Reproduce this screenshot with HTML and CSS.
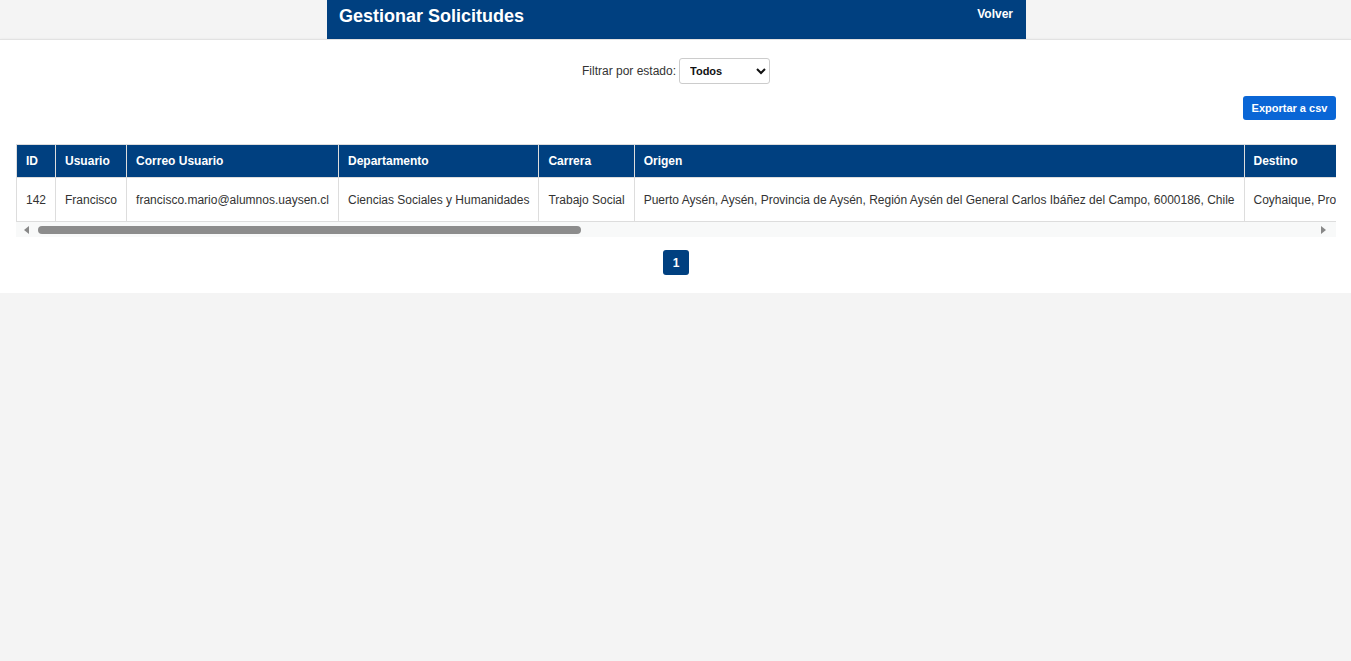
FILE: index.html
```html
<!DOCTYPE html>
<html lang="es">
<head>
<meta charset="utf-8">
<title>Gestionar Solicitudes</title>
<link rel="stylesheet" href="styles.css">
</head>
<body>
<header class="topbar">
  <h1 class="title">Gestionar Solicitudes</h1>
  <a class="back" href="#">Volver</a>
</header>
<main class="card">
  <div class="filter">
    <label class="filter-label" for="estado">Filtrar por estado:</label>
    <select id="estado" class="filter-select">
      <option>Todos</option>
      <option>Pendiente</option>
      <option>Aprobada</option>
      <option>Rechazada</option>
    </select>
  </div>
  <div class="actions">
    <button class="btn-export" type="button">Exportar a csv</button>
  </div>
  <div class="table-wrap">
    <table class="grid">
      <thead>
        <tr>
          <th>ID</th>
          <th>Usuario</th>
          <th>Correo Usuario</th>
          <th>Departamento</th>
          <th>Carrera</th>
          <th>Origen</th>
          <th>Destino</th>
          <th>Fecha</th>
          <th>Estado</th>
        </tr>
      </thead>
      <tbody>
        <tr>
          <td>142</td>
          <td>Francisco</td>
          <td>francisco.mario@alumnos.uaysen.cl</td>
          <td>Ciencias Sociales y Humanidades</td>
          <td>Trabajo Social</td>
          <td>Puerto Aysén, Aysén, Provincia de Aysén, Región Aysén del General Carlos Ibáñez del Campo, 6000186, Chile</td>
          <td>Coyhaique, Provincia de Coyhaique, Región Aysén del General Carlos Ibáñez del Campo, Chile</td>
          <td>2024-05-10</td>
          <td>Pendiente</td>
        </tr>
      </tbody>
    </table>
  </div>
  <div class="hscroll">
    <span class="arrow arrow-left"></span>
    <div class="track"><span class="thumb"></span></div>
    <span class="arrow arrow-right"></span>
  </div>
  <nav class="pager">
    <button class="page active" type="button">1</button>
  </nav>
</main>
</body>
</html>
```
FILE: styles.css
```css
* { box-sizing: border-box; }

body {
  margin: 0;
  background: #f4f4f4;
  font-family: "Liberation Sans", Arial, sans-serif;
  color: #333;
}

.topbar {
  width: 699px;
  height: 39px;
  margin: 0 0 0 calc(50% - 348.5px);
  background: #004080;
  color: #fff;
  display: flex;
  justify-content: space-between;
  align-items: flex-start;
  padding: 6px 13px 0 12px;
}

.title {
  margin: 0;
  font-size: 18px;
  font-weight: bold;
  line-height: 21px;
}

.back {
  color: #fff;
  text-decoration: none;
  font-size: 12px;
  font-weight: bold;
  line-height: 14px;
  margin-top: 1px;
}

.card {
  display: block;
  background: #fff;
  border-top: 1px solid #e2e2e2;
  box-shadow: 0 1px 3px rgba(0, 0, 0, 0.12);
  padding: 18px 15px 18px 16px;
}

.filter {
  display: flex;
  justify-content: center;
  align-items: center;
  gap: 3px;
}

.filter-label {
  font-size: 12px;
  color: #333;
}

.filter-select {
  width: 91px;
  height: 26px;
  border: 1px solid #ccc;
  border-radius: 3px;
  background: #fff;
  font-family: "Liberation Sans", Arial, sans-serif;
  font-size: 11px;
  font-weight: bold;
  color: #111;
  padding: 0 6px;
}

.actions {
  display: flex;
  justify-content: flex-end;
  margin-top: 12px;
}

.btn-export {
  width: 93px;
  height: 24px;
  border: none;
  border-radius: 3px;
  background: #0a66d6;
  color: #fff;
  font-family: "Liberation Sans", Arial, sans-serif;
  font-size: 11px;
  font-weight: bold;
  padding: 0;
}

.table-wrap {
  margin-top: 24px;
  overflow: hidden;
}

.grid {
  border-collapse: collapse;
  white-space: nowrap;
  font-size: 12px;
}

.grid th {
  background: #004080;
  color: #fff;
  font-weight: bold;
  text-align: left;
  padding: 9px;
  line-height: 14px;
  border: 1px solid #ddd;
}

.grid td {
  padding: 15px 9px 14px;
  line-height: 14px;
  border: 1px solid #ddd;
  color: #333;
}

.hscroll {
  display: flex;
  align-items: center;
  height: 15px;
  background: #f8f9f9;
}

.arrow {
  width: 0;
  height: 0;
  border-top: 4px solid transparent;
  border-bottom: 4px solid transparent;
}

.arrow-left {
  border-right: 5px solid #888;
  margin: 0 8px 0 8px;
}

.arrow-right {
  border-left: 5px solid #888;
  margin: 0 10px 0 5px;
}

.track {
  flex: 1;
  display: flex;
  align-items: center;
}

.thumb {
  display: block;
  width: 543px;
  height: 8px;
  border-radius: 4px;
  background: #8c8c8c;
  margin-left: 1px;
}

.pager {
  display: flex;
  justify-content: center;
  margin-top: 13px;
}

.page {
  width: 26px;
  height: 25px;
  border: none;
  border-radius: 3px;
  background: #004080;
  color: #fff;
  font-family: "Liberation Sans", Arial, sans-serif;
  font-size: 12px;
  font-weight: bold;
  padding: 0;
}
```
